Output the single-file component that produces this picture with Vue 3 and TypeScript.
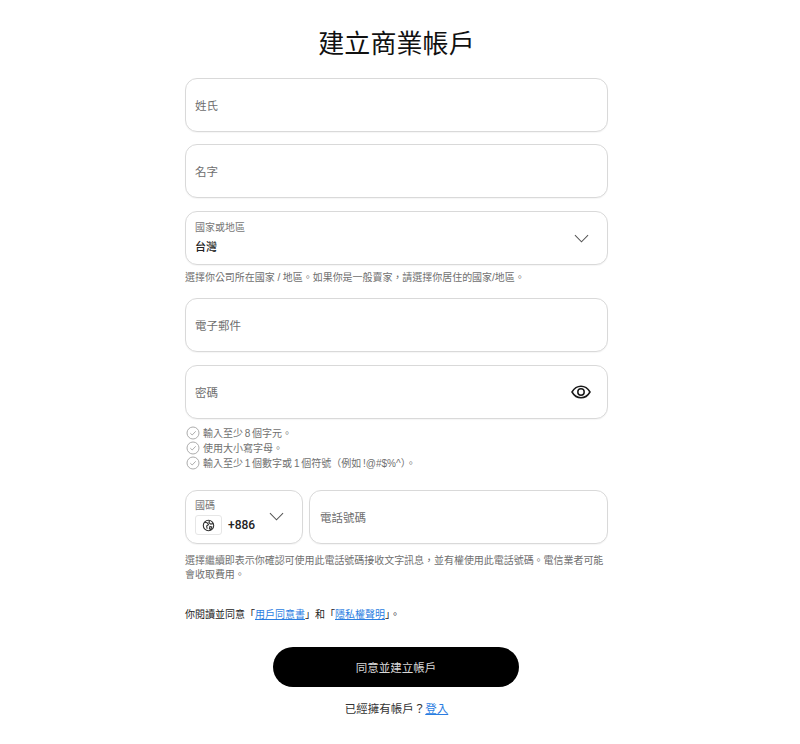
<script setup lang="ts">
const rules: string[] = [
  '輸入至少 8 個字元。',
  '使用大小寫字母。',
  '輸入至少 1 個數字或 1 個符號\uFF08例如 !@#$%^\uFF09。',
]
</script>

<template>
  <main class="page">
    <h1 class="title">建立商業帳戶</h1>
    <form class="form" @submit.prevent>
      <div class="field"><span class="placeholder">姓氏</span></div>
      <div class="field"><span class="placeholder">名字</span></div>
      <div class="group">
        <div class="field field-split">
          <div class="stack">
            <span class="small-label">國家或地區</span>
            <span class="value">台灣</span>
          </div>
          <svg class="chevron country-chevron" viewBox="0 0 16 9" fill="none"><path d="M1 1l7 7 7-7" stroke="#555" stroke-width="1.1" /></svg>
        </div>
        <p class="hint">選擇你公司所在國家 / 地區。如果你是一般賣家&#xFF0C;請選擇你居住的國家/地區。</p>
      </div>
      <div class="field"><span class="placeholder">電子郵件</span></div>
      <div class="group">
        <div class="field field-split">
          <span class="placeholder">密碼</span>
          <svg class="eye" viewBox="0 0 20 14" fill="none" stroke="#1a1a1a" stroke-width="1.5">
            <path d="M1 7c2.2-3.8 5.3-5.8 9-5.8s6.8 2 9 5.800c-2.2 3.800-5.300 5.800-9 5.800S3.200 10.800 1 7z" />
            <circle cx="10" cy="7" r="3.200" />
          </svg>
        </div>
        <ul class="rules">
          <li v-for="r in rules" :key="r" class="rule">
            <svg class="check" viewBox="0 0 14 14" fill="none" stroke="#a3a3a3" stroke-width="0.9">
              <circle cx="7" cy="7" r="6" />
              <path d="M4.300 7.200l1.900 1.800 3.500-3.700" />
            </svg>
            <span>{{ r }}</span>
          </li>
        </ul>
      </div>
      <div class="phone-group">
        <div class="phone-row">
          <div class="field code">
            <div class="stack">
              <span class="small-label">國碼</span>
              <div class="code-row">
                <span class="globe-box">
                  <svg class="globe" viewBox="0 0 14 14" fill="none" stroke="#333" stroke-width="1.200">
                    <circle cx="7" cy="7" r="5.600" />
                    <path d="M3 3.500l2.500.5 1.500 2-2 1.500.5 3M8 1.800L7.500 4l2 1.500 2.500-.5M8.500 8l2 .5-1 3-1.500-1z" />
                  </svg>
                </span>
                <span class="dial">+886</span>
              </div>
            </div>
            <svg class="chevron code-chevron" viewBox="0 0 16 9" fill="none"><path d="M1 1l7 7 7-7" stroke="#555" stroke-width="1.1" /></svg>
          </div>
          <div class="field phone"><span class="placeholder">電話號碼</span></div>
        </div>
        <p class="hint phone-hint">選擇繼續即表示你確認可使用此電話號碼接收文字訊息&#xFF0C;並有權使用此電話號碼。電信業者可能會收取費用。</p>
      </div>
      <p class="agree">你閱讀並同意「<a href="#">用戶同意書</a>」和「<a href="#">隱私權聲明</a>」。</p>
      <button class="submit" type="submit">同意並建立帳戶</button>
      <p class="login">已經擁有帳戶&#xFF1F;<a href="#">登入</a></p>
    </form>
  </main>
</template>

<style scoped>
.page {
  width: 793px;
  height: 744px;
  box-sizing: border-box;
  padding-top: 27px;
  overflow: hidden;
  font-family: "Liberation Sans", "Noto Sans CJK TC", sans-serif;
  color: #111;
  background: #fff;
}
.title {
  margin: 0;
  height: 34px;
  line-height: 34px;
  font-size: 26px;
  letter-spacing: 0.1px;
  font-weight: 400;
  text-align: center;
}
.form {
  width: 423px;
  margin: 17px 0 0 185px;
  display: flex;
  flex-direction: column;
  gap: 12.4px;
}
.field {
  box-sizing: border-box;
  height: 54px;
  padding: 0 18px 0 9px;
  border: 1px solid #d9d9d9;
  border-radius: 12px;
  display: flex;
  align-items: center;
  background: #fff;
  box-shadow: 0 1px 1px rgba(0, 0, 0, 0.04);
}
.field-split {
  justify-content: space-between;
}
.placeholder {
  font-size: 11.5px;
  color: #6e6e6e;
}
.stack {
  display: flex;
  flex-direction: column;
}
.small-label {
  font-size: 10px;
  line-height: 15px;
  color: #777;
}
.value {
  margin-top: 4px;
  font-size: 11px;
  line-height: 17px;
  font-weight: 500;
  color: #222;
}
.chevron {
  width: 15px;
  height: 9px;
}
.country-chevron {
  margin-top: 1px;
}
.eye {
  width: 20px;
  height: 14px;
  margin-right: -2px;
}
.hint {
  margin: 6px 0 0;
  font-size: 10px;
  line-height: 14px;
  letter-spacing: -0.04px;
  color: #6f6f6f;
}
.group {
  display: flex;
  flex-direction: column;
}
.group > .hint {
  margin-bottom: 1px;
}
.rules {
  list-style: none;
  margin: 6.5px 0 0;
  padding: 0;
}
.rule {
  display: flex;
  align-items: center;
  gap: 3px;
  height: 15px;
  padding-left: 1px;
  font-size: 10px;
  word-spacing: -1px;
  color: #6f6f6f;
}
.check {
  width: 14px;
  height: 14px;
  flex: none;
}
.phone-group {
  margin-top: 7.5px;
}
.phone-row {
  display: flex;
  gap: 6px;
}
.code {
  width: 118px;
  flex: none;
  justify-content: space-between;
}
.phone {
  flex: 1;
  padding-left: 10px;
}
.code-row {
  display: flex;
  align-items: center;
  gap: 6px;
  margin-top: 2px;
}
.globe-box {
  box-sizing: border-box;
  width: 27px;
  height: 20px;
  border: 1px solid #e6e6e6;
  border-radius: 3px;
  display: flex;
  align-items: center;
  justify-content: center;
}
.globe {
  width: 13px;
  height: 13px;
}
.dial {
  font-family: Roboto, "Liberation Sans", sans-serif;
  font-size: 12px;
  font-weight: 500;
  color: #222;
}
.code-chevron {
  margin-top: -1px;
}
.phone-hint {
  margin-top: 10px;
  line-height: 14px;
}
.agree {
  margin: 14px 0 0;
  font-size: 10px;
  line-height: 14px;
  color: #222;
}
a {
  color: #2a7de1;
  text-decoration: underline;
}
.submit {
  width: 246px;
  height: 40px;
  margin: 12px 0 0 88px;
  border: none;
  border-radius: 20px;
  background: #000;
  color: #d8d8d8;
  font: inherit;
  font-size: 11.5px;
}
.login {
  margin: 1.5px 0 0;
  font-size: 11.5px;
  line-height: 16px;
  text-align: center;
  color: #333;
}
</style>
